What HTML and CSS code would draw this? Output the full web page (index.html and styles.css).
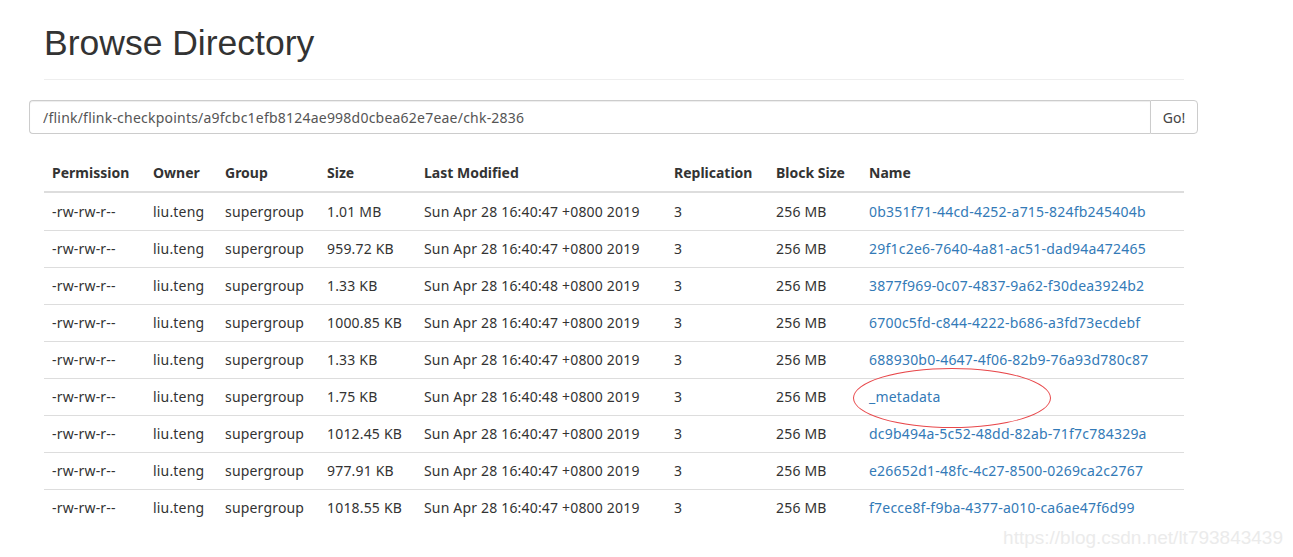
FILE: index.html
```html
<!DOCTYPE html>
<html>
<head>
<meta charset="utf-8">
<link rel="stylesheet" href="styles.css">
</head>
<body>
<div class="container">
  <div class="page-header"><h1>Browse Directory</h1></div>
  <div class="input-group">
    <input class="path" type="text" value="/flink/flink-checkpoints/a9fcbc1efb8124ae998d0cbea62e7eae/chk-2836">
    <button class="go">Go!</button>
  </div>
  <table class="listing">
    <colgroup>
      <col class="c-perm"><col class="c-owner"><col class="c-group"><col class="c-size"><col class="c-mod"><col class="c-rep"><col class="c-block"><col>
    </colgroup>
    <thead>
      <tr><th>Permission</th><th>Owner</th><th>Group</th><th>Size</th><th>Last Modified</th><th>Replication</th><th>Block Size</th><th>Name</th></tr>
    </thead>
    <tbody>
      <tr><td>-rw-rw-r--</td><td>liu.teng</td><td>supergroup</td><td>1.01 MB</td><td>Sun Apr 28 16:40:47 +0800 2019</td><td>3</td><td>256 MB</td><td><a href="#">0b351f71-44cd-4252-a715-824fb245404b</a></td></tr>
      <tr><td>-rw-rw-r--</td><td>liu.teng</td><td>supergroup</td><td>959.72 KB</td><td>Sun Apr 28 16:40:47 +0800 2019</td><td>3</td><td>256 MB</td><td><a href="#">29f1c2e6-7640-4a81-ac51-dad94a472465</a></td></tr>
      <tr><td>-rw-rw-r--</td><td>liu.teng</td><td>supergroup</td><td>1.33 KB</td><td>Sun Apr 28 16:40:48 +0800 2019</td><td>3</td><td>256 MB</td><td><a href="#">3877f969-0c07-4837-9a62-f30dea3924b2</a></td></tr>
      <tr><td>-rw-rw-r--</td><td>liu.teng</td><td>supergroup</td><td>1000.85 KB</td><td>Sun Apr 28 16:40:47 +0800 2019</td><td>3</td><td>256 MB</td><td><a href="#">6700c5fd-c844-4222-b686-a3fd73ecdebf</a></td></tr>
      <tr><td>-rw-rw-r--</td><td>liu.teng</td><td>supergroup</td><td>1.33 KB</td><td>Sun Apr 28 16:40:47 +0800 2019</td><td>3</td><td>256 MB</td><td><a href="#">688930b0-4647-4f06-82b9-76a93d780c87</a></td></tr>
      <tr><td>-rw-rw-r--</td><td>liu.teng</td><td>supergroup</td><td>1.75 KB</td><td>Sun Apr 28 16:40:48 +0800 2019</td><td>3</td><td>256 MB</td><td class="marked"><a href="#">_metadata</a><span class="ellipse"></span></td></tr>
      <tr><td>-rw-rw-r--</td><td>liu.teng</td><td>supergroup</td><td>1012.45 KB</td><td>Sun Apr 28 16:40:47 +0800 2019</td><td>3</td><td>256 MB</td><td><a href="#">dc9b494a-5c52-48dd-82ab-71f7c784329a</a></td></tr>
      <tr><td>-rw-rw-r--</td><td>liu.teng</td><td>supergroup</td><td>977.91 KB</td><td>Sun Apr 28 16:40:47 +0800 2019</td><td>3</td><td>256 MB</td><td><a href="#">e26652d1-48fc-4c27-8500-0269ca2c2767</a></td></tr>
      <tr><td>-rw-rw-r--</td><td>liu.teng</td><td>supergroup</td><td>1018.55 KB</td><td>Sun Apr 28 16:40:47 +0800 2019</td><td>3</td><td>256 MB</td><td><a href="#">f7ecce8f-f9ba-4377-a010-ca6ae47f6d99</a></td></tr>
    </tbody>
  </table>
</div>
<div class="watermark">https://blog.csdn.net/lt793843439</div>
</body>
</html>
```
FILE: styles.css
```css
html, body {
  margin: 0;
  padding: 0;
  background: #fff;
}
body {
  font-family: "Noto Sans", "Open Sans", sans-serif;
  font-size: 14px;
  color: #333;
  position: relative;
  height: 557px;
  overflow: hidden;
}
.container {
  width: 1140px;
  margin-left: 44px;
}
.page-header {
  margin-top: 0;
  padding-bottom: 14px;
  border-bottom: 1px solid #eee;
}
.page-header h1 {
  margin: 0;
  padding-top: 21px;
  font-family: "Liberation Sans", Arial, sans-serif;
  font-weight: 400;
  font-size: 35.5px;
  line-height: 44px;
  color: #333;
}
.input-group {
  display: flex;
  margin-top: 20px;
  margin-left: -15px;
  width: 1169px;
  height: 34px;
}
.path {
  flex: 1;
  height: 34px;
  box-sizing: border-box;
  border: 1px solid #ccc;
  border-right: 0;
  border-radius: 4px 0 0 4px;
  padding: 6px 13px;
  font-family: "Noto Sans", sans-serif;
  font-size: 14px;
  letter-spacing: 0.22px;
  color: #555;
  box-shadow: inset 0 1px 1px rgba(0,0,0,.075);
  outline: none;
}
.go {
  width: 48px;
  height: 34px;
  box-sizing: border-box;
  border: 1px solid #ccc;
  border-radius: 0 4px 4px 0;
  background: #fff;
  font-family: "Noto Sans", sans-serif;
  font-size: 14px;
  color: #444;
  padding: 0;
}
.listing {
  margin-top: 21px;
  width: 1140px;
  border-collapse: collapse;
  table-layout: fixed;
}
.c-perm { width: 101px; }
.c-owner { width: 72px; }
.c-group { width: 102px; }
.c-size { width: 97px; }
.c-mod { width: 250px; }
.c-rep { width: 102px; }
.c-block { width: 93px; }
.listing th {
  text-align: left;
  font-weight: 700;
  padding: 8px;
  height: 20px;
  line-height: 20px;
  border-bottom: 2px solid #ddd;
  white-space: nowrap;
}
.listing td {
  padding: 8px;
  height: 20px;
  line-height: 20px;
  border-bottom: 1px solid #ddd;
  white-space: nowrap;
  letter-spacing: 0.18px;
}
.listing tbody tr:first-child td {
  padding-top: 9px;
}
.listing tbody tr:last-child td {
  border-bottom: 0;
}
.listing a {
  color: #337ab7;
  text-decoration: none;
}
.listing td a {
  letter-spacing: 0.22px;
}
.marked {
  position: relative;
}
.ellipse {
  position: absolute;
  left: -8px;
  top: -11px;
  width: 196px;
  height: 58px;
  border: 1px solid #e8484b;
  border-radius: 50%;
  pointer-events: none;
}
.watermark {
  position: absolute;
  right: 10px;
  bottom: 8px;
  font-family: "Liberation Sans", Arial, sans-serif;
  font-size: 19px;
  color: #ebebeb;
}
```
